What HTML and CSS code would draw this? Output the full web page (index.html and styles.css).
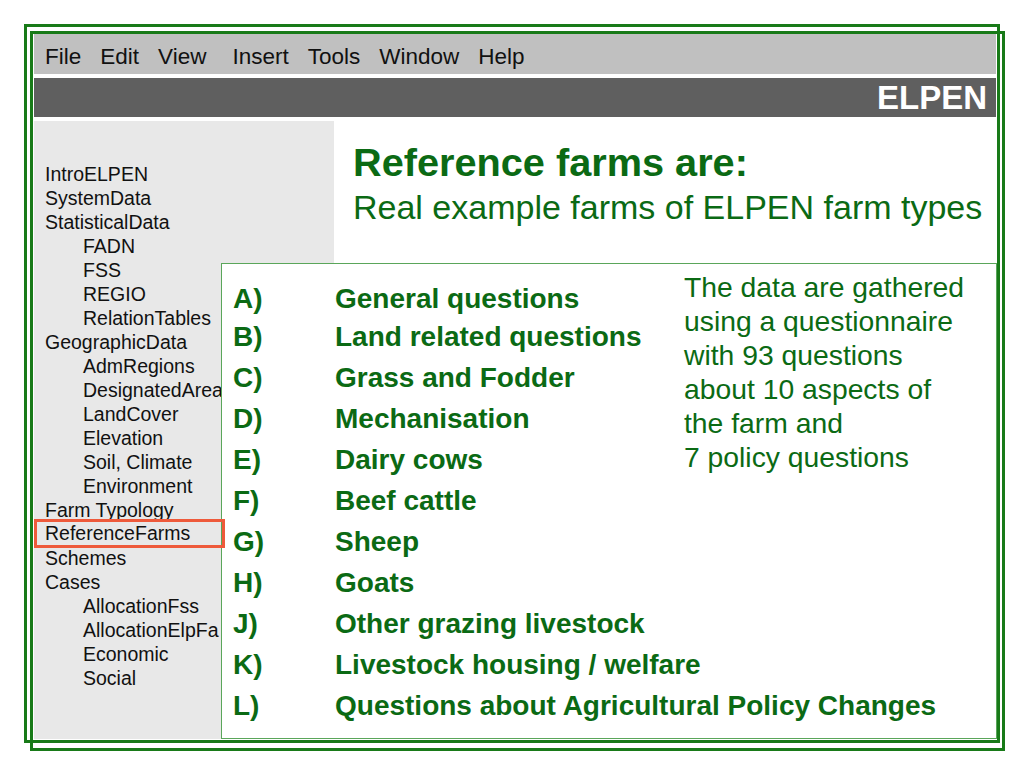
FILE: index.html
```html
<!DOCTYPE html>
<html lang="en">
<head>
    <meta charset="UTF-8">
    <title>ELPEN - Reference farms</title>
    <link rel="stylesheet" href="styles.css">
</head>
<body>
    <div class="window">
        <div class="menubar">
            <span>File</span>
            <span>Edit</span>
            <span>View</span>
            <span class="spaced">Insert</span>
            <span>Tools</span>
            <span>Window</span>
            <span>Help</span>
        </div>

        <div class="titlebar">ELPEN</div>

        <div class="main">
            <ul class="nav">
                <li>IntroELPEN</li>
                <li>SystemData</li>
                <li>StatisticalData</li>
                <li class="sub">FADN</li>
                <li class="sub">FSS</li>
                <li class="sub">REGIO</li>
                <li class="sub">RelationTables</li>
                <li>GeographicData</li>
                <li class="sub">AdmRegions</li>
                <li class="sub">DesignatedArea</li>
                <li class="sub">LandCover</li>
                <li class="sub">Elevation</li>
                <li class="sub">Soil, Climate</li>
                <li class="sub">Environment</li>
                <li>Farm Typology</li>
                <li class="active">ReferenceFarms</li>
                <li>Schemes</li>
                <li>Cases</li>
                <li class="sub">AllocationFss</li>
                <li class="sub">AllocationElpFa</li>
                <li class="sub">Economic</li>
                <li class="sub">Social</li>
            </ul>

            <div class="heading">
                <h1>Reference farms are:</h1>
                <p>Real example farms of ELPEN farm types</p>
            </div>

            <div class="panel">
                <p class="note">The data are gathered<br>using a questionnaire<br>with 93 questions<br>about 10 aspects of<br>the farm and<br>7 policy questions</p>
                <ul class="topics">
                    <li><span class="key">A)</span>General questions</li>
                    <li><span class="key">B)</span>Land related questions</li>
                    <li><span class="key">C)</span>Grass and Fodder</li>
                    <li><span class="key">D)</span>Mechanisation</li>
                    <li><span class="key">E)</span>Dairy cows</li>
                    <li><span class="key">F)</span>Beef cattle</li>
                    <li><span class="key">G)</span>Sheep</li>
                    <li><span class="key">H)</span>Goats</li>
                    <li><span class="key">J)</span>Other grazing livestock</li>
                    <li><span class="key">K)</span>Livestock housing / welfare</li>
                    <li><span class="key">L)</span>Questions about Agricultural Policy Changes</li>
                </ul>
            </div>
        </div>
    </div>
</body>
</html>
```

FILE: styles.css
```css
body {
    margin: 0;
    font-family: "Liberation Sans", Arial, sans-serif;
    background: white;
}

/* two offset green frames */
.window {
    position: relative;
    box-sizing: border-box;
    width: 975px;
    height: 720px;
    margin: 31px 0 0 30px;
    padding: 0 6px 9px 1px;
    border: 3px solid #187a18;
}

.window::before {
    content: "";
    position: absolute;
    left: -9px;
    top: -10px;
    box-sizing: border-box;
    width: 976px;
    height: 719px;
    border: 3px solid #187a18;
    z-index: 3;
    pointer-events: none;
}

.menubar {
    display: flex;
    gap: 19px;
    box-sizing: border-box;
    height: 40px;
    padding: 3px 0 0 11px;
    background: #c0c0c0;
    color: #111;
    font-size: 22.5px;
    line-height: 40px;
}

.menubar .spaced { margin-left: 7px; }

.titlebar {
    margin-top: 4px;
    height: 39px;
    padding-right: 9px;
    background: #5f5f5f;
    color: white;
    font-size: 33px;
    font-weight: bold;
    line-height: 39px;
    text-align: right;
}

.main {
    display: grid;
    grid-template-columns: 187px 113px 1fr;
    grid-template-rows: 142px 476px;
    margin-top: 4px;
}

.nav {
    grid-column: 1 / 3;
    grid-row: 1 / 3;
    margin: 0;
    padding: 41px 0 0;
    list-style: none;
    background: #e8e8e8;
    color: #111;
    font-size: 19.5px;
    line-height: 24px;
    white-space: nowrap;
}

.nav li {
    box-sizing: border-box;
    width: 187px;
    padding-left: 11px;
    overflow: hidden;
}

.nav li.sub { padding-left: 49px; }

.nav li.active {
    position: relative;
    z-index: 2;
    width: 191px;
    margin: -3px 0 -2px;
    padding-left: 8px;
    border: 3px solid #ee5a3b;
    line-height: 23px;
}

.heading {
    grid-column: 3;
    grid-row: 1;
    padding: 19px 0 0 19px;
    color: #0b6a14;
}

.heading h1 {
    margin: 0;
    font-size: 39.7px;
    line-height: 45px;
}

.heading p {
    margin: 0;
    font-size: 34px;
    line-height: 44px;
}

.panel {
    grid-column: 2 / 4;
    grid-row: 2;
    z-index: 1;
    margin-right: -1px;
    padding: 6px 0 0 11px;
    background: white;
    border: 1px solid #5aa65a;
    color: #0b6a14;
}

.note {
    float: right;
    width: 312px;
    margin: 0;
    font-size: 28.3px;
    line-height: 34px;
}

.topics {
    margin: 11px 0 0;
    padding: 0;
    list-style: none;
    font-size: 28px;
    font-weight: bold;
    line-height: 41px;
}

.topics li:first-child { line-height: 35px; }

.key {
    display: inline-block;
    width: 102px;
}
```
